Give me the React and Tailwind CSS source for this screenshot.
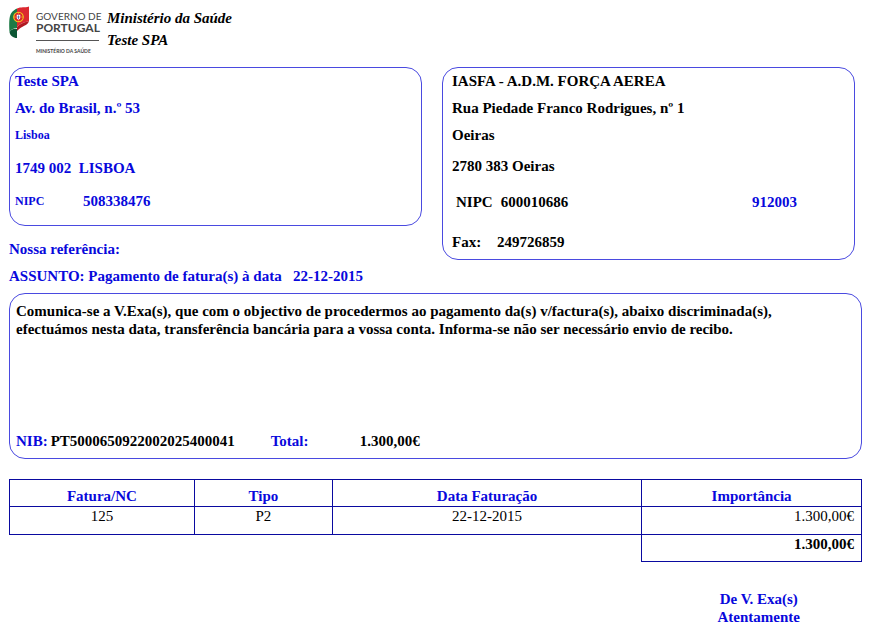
const card = "rounded-[16px] border border-[#4a4ae0]";
const cell = "border border-[#0a0aa0] p-0";

function Crest() {
  return (
    <svg viewBox="0 0 20 32" className="h-8 w-5 shrink-0" aria-hidden="true">
      <path d="M0.5 26C0 18 0 11 2 7.5C3.5 5 6 3.5 8 2.5L8 22C5 22 2.5 23 0.5 26Z" fill="#1c7a45" />
      <path d="M0.5 26C2.5 23 5 22.5 8 23L8 32C4 32 1 29.5 0.5 26Z" fill="#0d5634" />
      <path d="M8 2.5C12 0.5 15.5 2 20 0.5L20 15C16 16.5 12 16.5 8 21Z" fill="#dc2830" />
      <path d="M8 21C12 16.5 16 16.5 20 15C18.5 20 13 19.5 8 25Z" fill="#b01820" />
      <circle cx="9.5" cy="11" r="4.8" fill="#d8232a" stroke="#f2c31b" strokeWidth="1.1" />
      <path d="M4.5 11H14.5M9.5 6V16" stroke="#f2c31b" strokeWidth="0.7" />
      <path d="M6.9 7.8H12.1V12Q11.9 14 9.5 14.7Q7.1 14 6.9 12Z" fill="#d8232a" />
      <path d="M7.7 8.7H11.3V12Q11.1 13.3 9.5 13.8Q7.9 13.3 7.7 12Z" fill="#fff" />
      <path d="M9.5 9.4V13M8.3 11H10.7" stroke="#31499b" strokeWidth="0.7" />
    </svg>
  );
}

function Logo() {
  return (
    <div className="flex w-[90px] shrink-0 font-['Lato',sans-serif] text-[#444]">
      <Crest />
      <div className="ml-[7px] mt-[5px] min-w-0 flex-1 whitespace-nowrap">
        <div className="text-[10px] font-normal leading-[11px]">GOVERNO DE</div>
        <div className="text-[12px] font-bold leading-[12px]">PORTUGAL</div>
        <div className="mt-[6px] border-t border-[#555] pt-[6px] text-[5px] font-bold leading-[8px]">MINISTÉRIO DA SAÚDE</div>
      </div>
    </div>
  );
}

export default function App() {
  return (
    <main className="bg-white pb-[5px] pl-[9px] pr-[17px] pt-[6px] font-['Liberation_Serif',serif] text-[15px] font-bold leading-[18px] text-[#0808dc]">
      <header className="flex h-[61px] gap-2">
        <Logo />
        <div className="flex flex-col gap-1 pt-[3px] italic text-black">
          <h1>Ministério da Saúde</h1>
          <h2>Teste SPA</h2>
        </div>
      </header>

      <div className="grid grid-cols-2 items-start gap-5 pr-[7px]">
        <div>
          <section className={`${card} px-[5px] pb-[15px] pt-1`}>
            <p>Teste SPA</p>
            <p className="mt-[9px]">Av. do Brasil, n.º 53</p>
            <p className="mt-[9px] text-[12px] leading-[18px]">Lisboa</p>
            <p className="mt-[15px] whitespace-pre">1749 002  LISBOA</p>
            <dl className="mt-[15px] flex">
              <dt className="w-[68px] text-[12px] leading-[18px]">NIPC</dt>
              <dd>508338476</dd>
            </dl>
          </section>
          <p className="mt-[14px]">Nossa referência:</p>
          <p className="mt-[9px] whitespace-pre">ASSUNTO: Pagamento de fatura(s) à data   22-12-2015</p>
        </div>

        <section className={`${card} px-[9px] pb-2 pt-1 text-black`}>
          <p>IASFA - A.D.M. FORÇA AEREA</p>
          <p className="mt-[9px]">Rua Piedade Franco Rodrigues, nº 1</p>
          <p className="mt-[9px]">Oeiras</p>
          <p className="mt-[13px]">2780 383 Oeiras</p>
          <div className="mt-[18px] flex justify-between pl-1 pr-12">
            <dl className="flex gap-2">
              <dt>NIPC</dt>
              <dd>600010686</dd>
            </dl>
            <p className="text-[#0808dc]">912003</p>
          </div>
          <dl className="mt-[22px] flex">
            <dt className="w-[45px]">Fax:</dt>
            <dd>249726859</dd>
          </dl>
        </section>
      </div>

      <section className={`${card} mt-2 flex min-h-[166px] flex-col justify-between px-[6px] pb-2 pt-2`}>
        <p className="max-w-[800px] text-black">
          Comunica-se a V.Exa(s), que com o objectivo de procedermos ao pagamento da(s) v/factura(s), abaixo discriminada(s), efectuámos nesta data, transferência bancária para a vossa conta. Informa-se não ser necessário envio de recibo.
        </p>
        <dl className="flex">
          <dt>NIB:</dt>
          <dd className="ml-[3px] w-[220px] text-black">PT5000650922002025400041</dd>
          <dt className="w-[89px]">Total:</dt>
          <dd className="text-black">1.300,00€</dd>
        </dl>
      </section>

      <table className="mt-5 w-full table-fixed border-collapse text-center">
        <colgroup>
          <col className="w-[21.7%]" />
          <col className="w-[16.2%]" />
          <col className="w-[36.3%]" />
          <col className="w-[25.8%]" />
        </colgroup>
        <thead>
          <tr>
            {["Fatura/NC", "Tipo", "Data Faturação", "Importância"].map((h) => (
              <th key={h} className={`${cell} pb-px pt-[7px]`}>{h}</th>
            ))}
          </tr>
        </thead>
        <tbody className="font-normal text-black">
          <tr>
            <td className={`${cell} pb-[9px]`}>125</td>
            <td className={`${cell} pb-[9px]`}>P2</td>
            <td className={`${cell} pb-[9px]`}>22-12-2015</td>
            <td className={`${cell} pb-[9px] pr-[7px] text-right`}>1.300,00€</td>
          </tr>
        </tbody>
        <tfoot className="text-black">
          <tr>
            <td colSpan={3} />
            <td className={`${cell} pb-2 pr-[7px] text-right`}>1.300,00€</td>
          </tr>
        </tfoot>
      </table>

      <footer className="mt-7 flex justify-end pr-[62px] text-center">
        <p>
          De V. Exa(s)
          <br />
          Atentamente
        </p>
      </footer>
    </main>
  );
}
